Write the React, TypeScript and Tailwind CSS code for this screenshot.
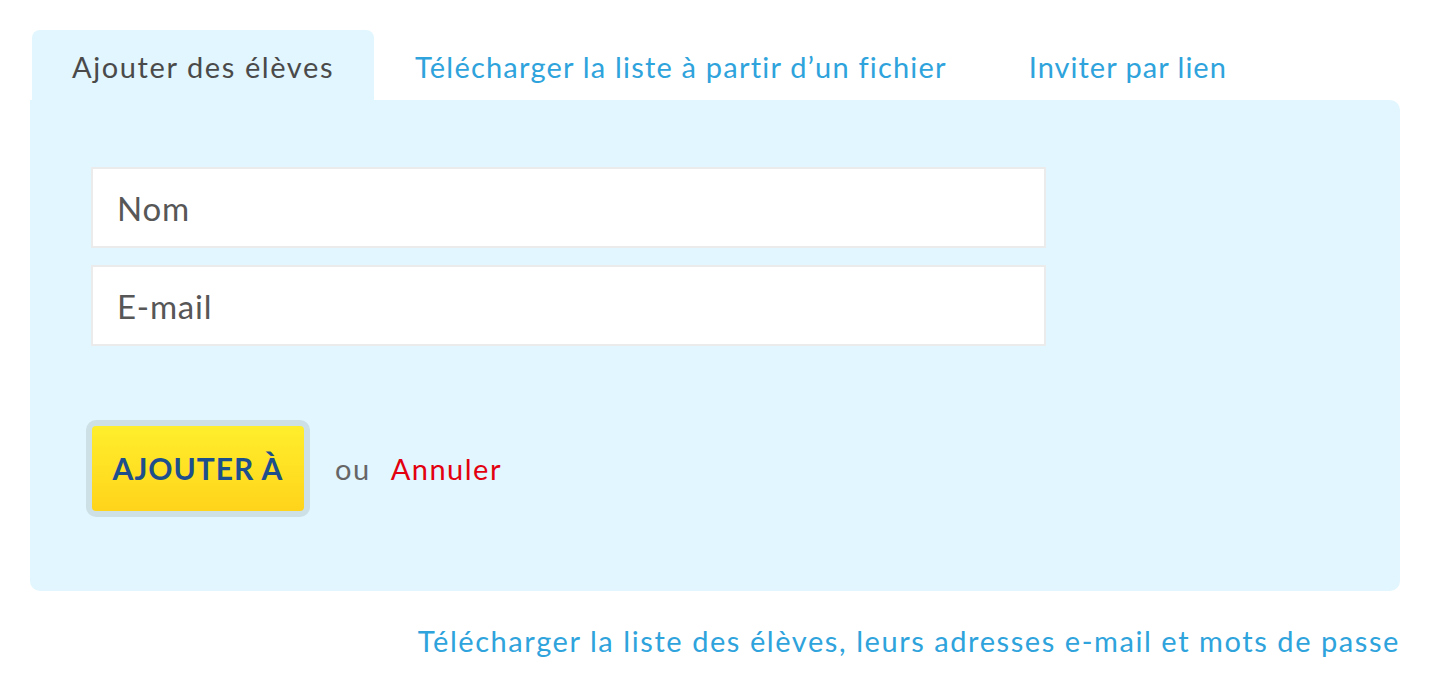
import React from "react";

export default function App() {
  return (
    <div className="w-[1430px] h-[700px] bg-white px-[30px] pt-[30px] text-[29px] tracking-[1.5px] font-['Lato',sans-serif]">
      <div className="flex h-[70px] pl-[2px]">
        <div className="flex items-center rounded-t-[8px] bg-[#e1f6fe] px-[40px] pt-[4px] text-[#4a4a4a] tracking-[1.6px]">
          Ajouter des élèves
        </div>
        <div className="flex items-center px-[41px] pt-[4px] tracking-[1.2px] text-[#2ea3dc]">Télécharger la liste à partir d’un fichier</div>
        <div className="flex items-center px-[41px] pt-[4px] tracking-[1px] text-[#2ea3dc]">Inviter par lien</div>
      </div>
      <div className="h-[491px] w-[1370px] rounded-b-[10px] rounded-tr-[10px] bg-[#e1f6fe] pl-[61px] pt-[67px]">
        <div className="flex w-[955px] flex-col gap-[17px]">
          <div className="flex h-[81px] items-center border-2 border-[#ebebeb] bg-white pl-[24px] pt-[2px] text-[33px] tracking-[0.8px] text-[#575757]">Nom</div>
          <div className="flex h-[81px] items-center border-2 border-[#ebebeb] bg-white pl-[24px] pt-[2px] text-[33px] tracking-[0.8px] text-[#575757]">E-mail</div>
        </div>
        <div className="mt-[74px] -ml-[5px] flex items-center">
          <div className="rounded-[10px] bg-[#cde0e6] p-[6px]">
            <div className="flex h-[85px] w-[212px] items-center justify-center rounded-[4px] bg-gradient-to-b from-[#ffee2c] to-[#ffd41a] text-[30px] font-bold tracking-[1px] text-[#1d4f8c]">
              AJOUTER À
            </div>
          </div>
          <span className="ml-[25px] text-[#666]">ou</span>
          <span className="ml-[20px] text-[#e3000f]">Annuler</span>
        </div>
      </div>
      <div className="flex w-[1370px] justify-end pt-[28px] tracking-[1.57px] text-[#2ea3dc]">
        Télécharger la liste des élèves, leurs adresses e-mail et mots de passe
      </div>
    </div>
  );
}
